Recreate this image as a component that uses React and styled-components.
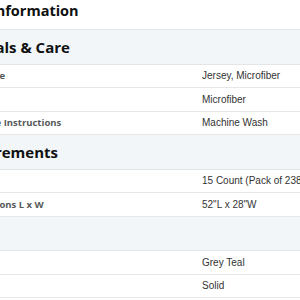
import styled, { createGlobalStyle } from 'styled-components';

const GlobalStyle = createGlobalStyle`
  html, body {
    margin: 0;
    padding: 0;
    background: #fff;
    overflow: hidden;
  }
`;

const Page = styled.div`
  width: 300px;
  height: 300px;
  overflow: hidden;
`;

// the table is wider than the viewport, its left edge is scrolled off
const Panel = styled.div`
  width: 480px;
  margin-left: -80px;
`;

const Title = styled.h2`
  margin: 0;
  height: 30px;
  box-sizing: border-box;
  padding: 0 0 8px 10px;
  display: flex;
  align-items: center;
  font-family: "Open Sans", "Liberation Sans", sans-serif;
  font-size: 14.5px;
  font-weight: 700;
  color: #0f1111;
  border-bottom: 1px solid #e3e6e6;
`;

const SectionHead = styled.div`
  height: 33.5px;
  display: flex;
  align-items: center;
  padding-left: 25.5px;
  background: #f3f6f9;
  border-bottom: 1px solid #e3e6e6;
  font-family: "Open Sans", "Liberation Sans", sans-serif;
  font-size: 15px;
  font-weight: 700;
  color: #0f1111;
`;

const Row = styled.div`
  display: grid;
  grid-template-columns: 282px 1fr;
  height: 22.5px;
  align-items: center;
  border-bottom: 1px solid #e7e7e7;
`;

const Label = styled.span`
  padding-left: ${(p) => p.$indent}px;
  font-family: "Open Sans", "Liberation Sans", sans-serif;
  font-size: 9.5px;
  font-weight: 700;
  color: #565959;
  white-space: nowrap;
`;

const Value = styled.span`
  font-family: "Liberation Sans", Arial, sans-serif;
  font-size: 10px;
  color: #333;
  white-space: nowrap;
`;

const sections = [
  {
    title: 'Materials & Care',
    rows: [
      ['Fabric Type', 'Jersey, Microfiber', 31],
      ['Material', 'Microfiber', 20],
      ['Care Instructions', 'Machine Wash', 59.5],
    ],
  },
  {
    title: 'Measurements',
    rows: [
      ['Unit Count', '15 Count (Pack of 238)', 20],
      ['Item Dimensions L x W', '52"L x 28"W', 16],
    ],
  },
  {
    title: 'Style',
    rows: [
      ['Color', 'Grey Teal', 20],
      ['Pattern', 'Solid', 20],
    ],
  },
];

export default function App() {
  return (
    <Page>
      <GlobalStyle />
      <Panel>
        <Title>Product Information</Title>
        {sections.map((s) => (
          <div key={s.title}>
            <SectionHead>{s.title}</SectionHead>
            {s.rows.map(([label, value, indent]) => (
              <Row key={label}>
                <Label $indent={indent}>{label}</Label>
                <Value>{value}</Value>
              </Row>
            ))}
          </div>
        ))}
      </Panel>
    </Page>
  );
}
